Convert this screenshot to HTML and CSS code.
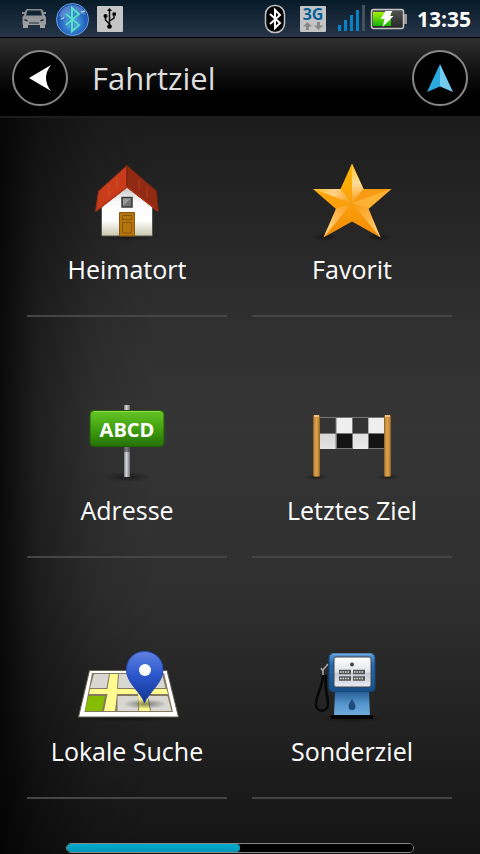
FILE: index.html
```html
<!DOCTYPE html>
<html lang="de">
<head>
<meta charset="utf-8">
<meta name="viewport" content="width=device-width, initial-scale=1">
<title>Fahrtziel</title>
<link rel="stylesheet" href="styles.css">
</head>
<body>
<div class="status">
  <svg class="status-left" viewBox="0 0 130 37" aria-hidden="true">
    <defs>
      <radialGradient id="orb" cx=".5" cy=".6" r=".55"><stop offset="0" stop-color="#76b8ee"/><stop offset=".55" stop-color="#2f77cd"/><stop offset="1" stop-color="#1746a6"/></radialGradient>
      <linearGradient id="car" x2="0" y2="1"><stop offset="0" stop-color="#85898c"/><stop offset="1" stop-color="#a3a3a3"/></linearGradient>
    </defs>
    <path fill="url(#car)" fill-rule="evenodd" d="M27 9h14q1.500 0 2 1.500l1.500 4.500 1.500 2v7.500h-1V28h-5v-3H28v3h-5v-3.500h-.5V17l1.500-2 1.500-4.500Q26 9 27 9Zm.5 1.500L26 15.500h16l-1.500-5ZM24.500 19v1.500l3 1v-1.500Zm19 0-3 1v1.500l3-1ZM29 22.500v1h10v-1Z"/>
    <path fill="#8b8e90" d="M22 12h3v2h-3zM43 12h3v2h-3z"/>
    <circle cx="72.500" cy="19.500" r="16" fill="url(#orb)" stroke="#69a6e4"/>
    <path d="M59 16Q62 5 72.500 5T86 15Q76 11 68 17 63 19 59 16Z" fill="#c3e4ff" opacity=".3"/>
    <path d="m66 14 13 11-7 6V8l7 6-13 11" fill="none" stroke="#2d8dba" stroke-width="3.500"/>
    <path d="m66 14 13 11-7 6V8l7 6-13 11" fill="none" stroke="#5edbd0" stroke-width="2"/>
    <path d="m61 19 3-1M81 12l4-1" stroke="#d7f3ff"/>
    <rect x="97" y="6" width="26" height="26" rx="1" fill="#c5c5c5"/>
    <path d="M109.500 26V10M109.500 24l-4-4v-4M109.500 21l4.500-3v-4" fill="none" stroke="#111" stroke-width="1.500"/>
    <path d="m109.500 8 2.500 3h-5zM112.500 12.500h3.500v3h-3.500z"/><circle cx="105.500" cy="16" r="2"/><circle cx="109.500" cy="26.500" r="2.300"/>
  </svg>
  <div class="status-right">
    <svg class="status-icons" viewBox="260 0 150 37" aria-hidden="true">
      <defs>
        <linearGradient id="charge" x2="0" y2="1"><stop offset="0" stop-color="#a4f000"/><stop offset="1" stop-color="#12b500"/></linearGradient>
        <linearGradient id="cell" x2="0" y2="1"><stop offset="0" stop-color="#555"/><stop offset="1" stop-color="#242424"/></linearGradient>
      </defs>
      <rect x="265.500" y="5.500" width="19" height="27" rx="9" fill="#000" stroke="#c2c2c2" stroke-width="1.500"/>
      <path d="m270 14 10 9-5 5V10l5 5-10 9" fill="none" stroke="#fff" stroke-width="2"/>
      <rect x="300" y="6" width="26" height="26" rx="1" fill="#c4c4c4"/>
      <text class="network" x="313" y="20" text-anchor="middle">3G</text>
      <path fill="#888" d="m307.500 22 4.500 4.500h-3V30h-3v-3.500h-3zM318.500 30l-4.500-4.500h3V22h3v3.500h3z"/>
      <path fill="#0784c7" d="M338 25h3v6h-3zM344 20h3v11h-3zM350 15h3v16h-3zM356 10h3v21h-3z"/>
      <path fill="#46505a" d="M362 5h3v26h-3z"/>
      <path fill="#999" d="M403 14h4v10h-4z"/>
      <rect x="371.500" y="9.500" width="32" height="19" rx="2" fill="url(#cell)" stroke="#c5c3c3" stroke-width="1.500"/>
      <path fill="url(#charge)" d="M373 12h18v14h-18z"/>
      <path fill="#fff" d="m385.500 11 7 0-3 5h4l-11 11 2-8h-4z"/>
    </svg>
    <time class="clock">13:35</time>
  </div>
</div>

<header class="bar">
  <button class="round" type="button" aria-label="Zurück">
    <svg viewBox="12 50 56 56" aria-hidden="true"><path fill="#fff" d="M29 78 51 65Q41 78 51 91Z"/></svg>
  </button>
  <h1 class="title">Fahrtziel</h1>
  <button class="round" type="button" aria-label="Navigation">
    <svg viewBox="412 50 56 56" aria-hidden="true"><path fill="#2ba9df" d="M440 64 427 92 440 86.500Z"/><path fill="#75cbef" d="M440 64 453 92 440 86.500Z"/></svg>
  </button>
</header>

<main class="content">
  <nav class="grid">
    <a class="tile" href="#heimatort">
      <svg class="icon" viewBox="67 155 120 90" aria-hidden="true">
        <defs>
          <linearGradient id="wall" x2="0" y2="1"><stop offset="0" stop-color="#bbb"/><stop offset=".35" stop-color="#fafafa"/><stop offset=".7" stop-color="#fff"/><stop offset="1" stop-color="#c9c5ac"/></linearGradient>
          <radialGradient id="shade"><stop offset="0" stop-color="#000" stop-opacity=".45"/><stop offset="1" stop-color="#000" stop-opacity="0"/></radialGradient>
        </defs>
        <ellipse cx="127" cy="236" rx="36" ry="5" fill="url(#shade)"/>
        <path fill="url(#wall)" stroke="#55554d" d="M101.500 207 127 184l25.500 23v29h-51z"/>
        <path fill="#c83c1b" stroke="#8c2b13" d="M127 165.500 98.500 191 95.500 211.500 127 187Z"/>
        <path fill="#902a12" stroke="#72210f" d="M127 165.500 156.500 191 158.500 211.500 127 187Z"/>
        <path d="m96 211 31-24 31 24" fill="none" stroke="#b33217" stroke-width="1.500"/>
        <path d="M109 184v12M117 177v12" stroke="#db5733" opacity=".7"/><path d="M139 179v12M147 186v12" stroke="#b23b20"/>
        <path fill="#727272" stroke="#393939" stroke-width="1.500" d="M122 197.500h10v9.500h-10z"/><path d="M123 206v-7.500h8z" fill="#999"/>
        <path fill="#b6760b" stroke="#895506" d="M119.500 212.500h15V236h-15zM122.500 215.500h9v4h-9zM122.500 222.500h9V233h-9z"/>
      </svg>
      <span class="label">Heimatort</span>
    </a>
    <a class="tile" href="#favorit">
      <svg class="icon" viewBox="292 155 120 90" aria-hidden="true">
        <defs>
          <linearGradient id="star" x2="0" y2="1"><stop offset="0" stop-color="#ffb900"/><stop offset=".5" stop-color="#fca20d"/><stop offset="1" stop-color="#f28b05"/></linearGradient>
          <linearGradient id="tip" gradientUnits="userSpaceOnUse" x1="352" y1="164" x2="352" y2="203"><stop offset="0" stop-color="#ffc02c"/><stop offset=".5" stop-color="#ffdc9a"/><stop offset="1" stop-color="#f99b10"/></linearGradient>
          <linearGradient id="arm" gradientUnits="userSpaceOnUse" x1="313" y1="189" x2="352" y2="203"><stop offset="0" stop-color="#ffbd28"/><stop offset=".5" stop-color="#ffd28a"/><stop offset="1" stop-color="#f99b10"/></linearGradient>
          <linearGradient id="foot" gradientUnits="userSpaceOnUse" x1="324" y1="237" x2="352" y2="203"><stop offset="0" stop-color="#ffdc94"/><stop offset=".5" stop-color="#ffbd57"/><stop offset="1" stop-color="#f99b10"/></linearGradient>
          <linearGradient id="foot2" gradientUnits="userSpaceOnUse" x1="380" y1="237" x2="352" y2="203"><stop offset="0" stop-color="#ffd88e"/><stop offset=".5" stop-color="#ffb444"/><stop offset="1" stop-color="#f99b10"/></linearGradient>
        </defs>
        <ellipse cx="325" cy="237" rx="13" ry="4" fill="url(#shade)"/><ellipse cx="379" cy="237" rx="13" ry="4" fill="url(#shade)"/>
        <path fill="url(#star)" d="m352 163.500 11.500 25.500H391.500L368.500 209 380.500 237.500 352 221.500 323.500 237.500 336 209 313 189H340.500Z"/>
        <path fill="url(#tip)" d="m352 164 11.500 25L352 203Z"/>
        <path fill="url(#arm)" d="M313 189h27.500L352 203Z"/>
        <path fill="#f99b12" d="m363.500 189 28 0L352 203Z"/><path fill="#ffc15a" opacity=".5" d="m391 189-23 20-16-6Z"/>
        <path fill="url(#foot)" d="m336 209-12.500 28.500L352 203Z"/>
        <path fill="url(#foot2)" d="m368.500 209 12 28.500L352 203Z"/>
      </svg>
      <span class="label">Favorit</span>
    </a>
    <a class="tile" href="#adresse">
      <svg class="icon" viewBox="67 396 120 90" aria-hidden="true">
        <defs>
          <linearGradient id="post"><stop offset="0" stop-color="#777b80"/><stop offset=".4" stop-color="#d5d7dd"/><stop offset="1" stop-color="#6b6e75"/></linearGradient>
          <linearGradient id="sign" x2="0" y2="1"><stop offset="0" stop-color="#66c524"/><stop offset=".5" stop-color="#41a10f"/><stop offset="1" stop-color="#237004"/></linearGradient>
        </defs>
        <ellipse cx="127" cy="477" rx="25" ry="5" fill="url(#shade)"/>
        <path fill="url(#post)" d="M124 405h6v72h-6z"/><path fill="#333" opacity=".55" d="M124 447h6v5h-6z"/>
        <rect x="90" y="410.500" width="74" height="36" rx="4" fill="url(#sign)" stroke="#205f08"/>
        <path d="M94 411.500h66" stroke="#91d850"/>
        <text class="sign" x="127" y="437" text-anchor="middle">ABCD</text>
      </svg>
      <span class="label">Adresse</span>
    </a>
    <a class="tile" href="#letztes-ziel">
      <svg class="icon" viewBox="292 396 120 90" aria-hidden="true">
        <defs>
          <linearGradient id="wood"><stop offset="0" stop-color="#b67c30"/><stop offset=".45" stop-color="#dca552"/><stop offset="1" stop-color="#b27a28"/></linearGradient>
          <linearGradient id="white" x2="1" y2="1"><stop offset="0" stop-color="#d5d5d5"/><stop offset="1" stop-color="#ededed"/></linearGradient>
        </defs>
        <ellipse cx="316" cy="477" rx="12" ry="3" fill="url(#shade)"/><ellipse cx="388" cy="477" rx="12" ry="3" fill="url(#shade)"/>
        <path fill="#777" d="M320 417h64v32h-64z"/>
        <path fill="#333" d="M320 418h15.500v15H320zM353 418h15v15h-15z"/>
        <path fill="#141414" d="M337 434h15v14h-15zM369 434h15v14h-15z"/>
        <path fill="#eee" d="M336.500 418h15.500v15h-15.500zM368.500 418H384v15h-15.500z"/>
        <path fill="url(#white)" d="M320 434h15.500v15H320zM353 434h15v15h-15z"/>
        <rect x="313.500" y="415.500" width="6" height="61" rx="1" fill="url(#wood)" stroke="#9a6a24"/>
        <rect x="384.500" y="415.500" width="6" height="61" rx="1" fill="url(#wood)" stroke="#9a6a24"/>
        <path fill="#edbd80" d="M314 415h5v2h-5zM385 415h5v2h-5z"/>
      </svg>
      <span class="label">Letztes Ziel</span>
    </a>
    <a class="tile" href="#lokale-suche">
      <svg class="icon" viewBox="67 637 120 90" aria-hidden="true">
        <defs><linearGradient id="pin" x2="0" y2="1"><stop offset="0" stop-color="#5f82e0"/><stop offset=".45" stop-color="#2c58ce"/><stop offset="1" stop-color="#123291"/></linearGradient></defs>
        <ellipse cx="128" cy="718" rx="54" ry="4" fill="url(#shade)"/>
        <path fill="#fff" stroke="#665f50" d="M89.500 670.500h77.500l11.500 46.500H78.500Z"/>
        <path fill="#84785f" d="M92 673h72l9 39H84.500Z"/>
        <path fill="#d9d7d1" d="M94 674h15l-2.500 14H90ZM119 674h18l1 14h-20ZM141 674h21l3.500 14H143ZM117.500 696H138v15h-20.500ZM148 696h19.500l4 15H151Z"/>
        <path fill="#84bc00" d="M88.500 696H105l-3 15H85Z"/>
        <path fill="#fffb8e" d="M110 674h8l-1 15h49.500l1.500 5h-21l3 17h-11l-1-17h-21l-2 17h-11l3.500-17H89l1-5h17.500Z"/>
        <ellipse cx="145" cy="704" rx="22" ry="5" fill="url(#shade)"/>
        <path fill="url(#pin)" stroke="#244bb4" d="M144.500 703c-3-10-18-20-18-33 0-11 7.500-18.500 18-18.500s18.500 7.500 18.500 18.500c0 13-15 23-18.500 33Z"/>
        <circle cx="145" cy="670" r="6" fill="#fff"/>
      </svg>
      <span class="label">Lokale Suche</span>
    </a>
    <a class="tile" href="#sonderziel">
      <svg class="icon" viewBox="292 637 120 90" aria-hidden="true">
        <defs>
          <linearGradient id="pump" x2="0" y2="1"><stop offset="0" stop-color="#5b9cd8"/><stop offset=".3" stop-color="#246aac"/><stop offset="1" stop-color="#164f88"/></linearGradient>
          <linearGradient id="base" x2="0" y2="1"><stop offset="0" stop-color="#235b93"/><stop offset=".5" stop-color="#5594cc"/><stop offset="1" stop-color="#73addd"/></linearGradient>
          <linearGradient id="dial" x2="0" y2="1"><stop offset="0" stop-color="#fff"/><stop offset=".5" stop-color="#e3e4ea"/><stop offset=".55" stop-color="#c8cad5"/><stop offset="1" stop-color="#e8eaf0"/></linearGradient>
        </defs>
        <ellipse cx="352" cy="718" rx="32" ry="5" fill="url(#shade)"/>
        <path d="M323 675c0 10-7 21-7 29 0 9 12 9 12 0 0-9-4-15-2-29" fill="none" stroke="#070707" stroke-width="2.500"/>
        <path d="m321 668 2 3v4M323 670l5-6" fill="none" stroke="#aaa" stroke-width="1.500"/>
        <path fill="url(#base)" d="M335 691h34l1 25h-36z"/>
        <rect x="329" y="653.500" width="46" height="38" rx="4" fill="url(#pump)" stroke="#17497b"/>
        <path d="M332 654h40" stroke="#8dbce9"/>
        <rect x="334" y="657" width="37" height="30" rx="2" fill="url(#dial)" stroke="#42454b"/>
        <circle cx="352" cy="664.500" r="2" fill="#444"/>
        <path d="M339 672h12M353 672h12M339 678.500h12M353 678.500h12" stroke="#555" stroke-width="4.500"/>
        <path d="M340 672h10M354 672h10M340 678.500h10M354 678.500h10" stroke="#ddd" stroke-width="1.500" stroke-dasharray="1.500 1"/>
        <path fill="#1c4b7c" d="M352 699q3.500 5 3.500 7.500a3.500 3.500 0 0 1-7 0Q348.500 704 352 699Z"/>
        <path fill="#050505" d="M331 715h42v4h-42z"/>
      </svg>
      <span class="label">Sonderziel</span>
    </a>
  </nav>
  <progress class="scroll" value="50" max="100" aria-label="Seitenposition"></progress>
</main>
</body>
</html>
```
FILE: styles.css
```css
* {
  box-sizing: border-box;
}

body {
  margin: 0;
  min-height: 100vh;
  display: flex;
  flex-direction: column;
  background: #000;
  color: #fff;
  font-family: "Open Sans", "Noto Sans", sans-serif;
}

.status {
  height: 38px;
  display: flex;
  justify-content: space-between;
  border-bottom: 1px solid #000;
  background: linear-gradient(#061b28, #273449);
}

.status svg {
  height: 37px;
  display: block;
}

.status-left {
  width: 130px;
}

.status-right {
  display: flex;
  align-items: center;
  gap: 7px;
  padding-right: 9px;
}

.status-icons {
  width: 150px;
}

.clock {
  font-size: 21px;
  line-height: 38px;
  font-weight: 700;
}

.network {
  font-size: 16px;
  font-weight: 700;
  fill: #06619c;
}

.bar {
  height: 80px;
  display: flex;
  align-items: center;
  gap: 24px;
  padding: 2px 12px 0;
  border-bottom: 2px solid #1d1d1d;
  background: linear-gradient(#303030, #0c0c0c 50%, #000 75%);
}

.round {
  width: 56px;
  height: 56px;
  flex: none;
  padding: 0;
  border: 2px solid #888;
  border-radius: 50%;
  background: #000;
}

.round svg {
  width: 56px;
  height: 56px;
  display: block;
  margin: -2px;
}

.title {
  flex: 1;
  margin: 0;
  color: #ddd;
  font-size: 31px;
  line-height: 40px;
  font-weight: 400;
}

.content {
  flex: 1;
  display: flex;
  flex-direction: column;
  align-items: center;
  background:
    linear-gradient(90deg, rgba(0, 0, 0, 0.8), rgba(0, 0, 0, 0.4) 8%, rgba(0, 0, 0, 0.1) 20%, transparent 32%),
    linear-gradient(#1c1c1c, #2f2f2f 27%, #353535 42%, #2f2f2f 65%, #141414);
}

.grid {
  width: 100%;
  display: grid;
  grid-template-columns: 1fr 1fr;
  gap: 42px 25px;
  padding: 0 28px 0 27px;
}

.tile {
  display: flex;
  flex-direction: column;
  align-items: center;
  gap: 6px;
  padding: 37px 0 28px;
  border-bottom: 2px solid #454545;
  color: #fff;
  text-decoration: none;
}

.icon {
  width: 120px;
  height: 90px;
}

.label {
  font-size: 25px;
  line-height: 36px;
}

.sign {
  font-size: 20px;
  font-weight: 700;
  fill: #fff;
}

.scroll {
  appearance: none;
  width: 72.5%;
  height: 10px;
  margin-top: 44px;
  overflow: hidden;
  border: 1px solid #888;
  border-radius: 5px;
  background: #000;
}

.scroll::-webkit-progress-bar {
  background: #000;
}

.scroll::-webkit-progress-value {
  border-radius: 0 4px 4px 0;
  background: linear-gradient(#02add0, #0595b5);
}
```
